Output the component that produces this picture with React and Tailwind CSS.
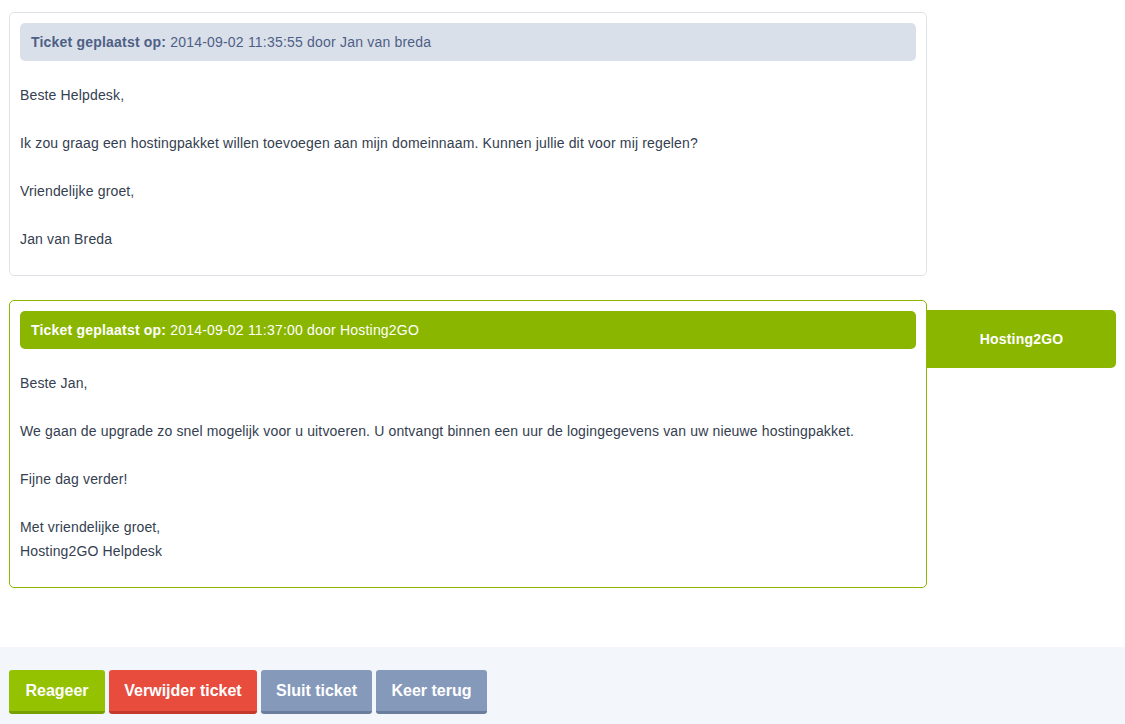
import React from "react";

const font = { fontFamily: '"Liberation Sans", Arial, sans-serif' };

const tickets = [
  {
    staff: false,
    date: "2014-09-02 11:35:55",
    author: "Jan van breda",
    paragraphs: [
      ["Beste Helpdesk,"],
      ["Ik zou graag een hostingpakket willen toevoegen aan mijn domeinnaam. Kunnen jullie dit voor mij regelen?"],
      ["Vriendelijke groet,"],
      ["Jan van Breda"],
    ],
  },
  {
    staff: true,
    date: "2014-09-02 11:37:00",
    author: "Hosting2GO",
    paragraphs: [
      ["Beste Jan,"],
      ["We gaan de upgrade zo snel mogelijk voor u uitvoeren. U ontvangt binnen een uur de logingegevens van uw nieuwe hostingpakket."],
      ["Fijne dag verder!"],
      ["Met vriendelijke groet,", "Hosting2GO Helpdesk"],
    ],
  },
];

function Message({ ticket }) {
  const { staff } = ticket;
  return (
    <div className="flex items-start">
      <div
        className={`w-[918px] shrink-0 rounded-[5px] border bg-white p-[10px] ${
          staff ? "border-[#8cb800]" : "border-[#dfe3e8]"
        }`}
      >
        <div
          className={`flex h-[38px] items-center rounded-[5px] px-[11px] text-[14px] tracking-[0.2px] ${
            staff ? "bg-[#8ab600] text-white" : "bg-[#dae0ea] text-[#4e5f86]"
          }`}
        >
          <span className="font-bold">Ticket geplaatst op:</span>
          <span className="ml-[4px]">
            {ticket.date} door {ticket.author}
          </span>
        </div>
        <div className="mt-[22px] mb-[14px] text-[14px] leading-[24px] tracking-[0.15px] text-[#34404f]">
          {ticket.paragraphs.map((p, i) => (
            <p key={i} className={i > 0 ? "mt-[24px]" : ""}>
              {p.map((line, j) => (
                <span key={j} className="block">
                  {line}
                </span>
              ))}
            </p>
          ))}
        </div>
      </div>
      {staff && (
        <div className="mt-[10px] flex h-[58px] w-[189px] items-center justify-center rounded-r-[5px] bg-[#8ab600] text-[14px] font-bold tracking-[0.2px] text-white">
          {ticket.author}
        </div>
      )}
    </div>
  );
}

export default function App() {
  return (
    <div className="min-h-screen bg-white" style={font}>
      <div className="flex flex-col gap-[24px] px-[9px] pt-[12px]">
        {tickets.map((t, i) => (
          <Message key={i} ticket={t} />
        ))}
      </div>

      {/* Actions */}
      <div className="mt-[59px] flex gap-[4px] bg-[#f3f6fa] px-[9px] pt-[23px] pb-[12px]">
        <button className="h-[44px] w-[96px] rounded-[3px] border-b-[3px] border-[#76a000] bg-[#94c100] text-[16px] font-bold text-white">
          Reageer
        </button>
        <button className="h-[44px] w-[148px] rounded-[3px] border-b-[3px] border-[#c4392c] bg-[#e84c3d] text-[16px] font-bold text-white">
          Verwijder ticket
        </button>
        <button className="h-[44px] w-[111px] rounded-[3px] border-b-[3px] border-[#6b7d9c] bg-[#8599ba] text-[16px] font-bold text-white">
          Sluit ticket
        </button>
        <button className="h-[44px] w-[111px] rounded-[3px] border-b-[3px] border-[#6b7d9c] bg-[#8599ba] text-[16px] font-bold text-white">
          Keer terug
        </button>
      </div>
    </div>
  );
}
